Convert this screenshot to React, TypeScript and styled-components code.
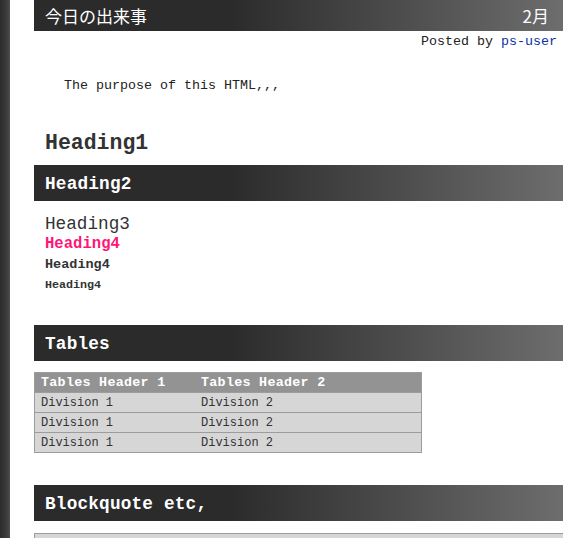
import React from "react";
import styled, { createGlobalStyle } from "styled-components";

const Global = createGlobalStyle`
  html, body { margin: 0; padding: 0; background: #fff; overflow: hidden; }
  body { font-family: "Liberation Mono", "Courier New", monospace; color: #222; }
`;

const Page = styled.div`
  display: flex;
  min-height: 538px;
  width: 563px;
  overflow: hidden;
`;

const Shadow = styled.div`
  flex: 0 0 10px;
  background: linear-gradient(to right, #2c2c2c 0%, #3a3a3a 60%, #4c4c4c 100%);
`;

const Main = styled.div`
  flex: 1;
  padding-left: 24px;
  min-width: 0;
`;

const barBg = `linear-gradient(to right, #2b2b2b 0%, #2b2b2b 37%, #6d6d6d 100%)`;

const TopBar = styled.div`
  height: 31px;
  display: flex;
  align-items: center;
  justify-content: space-between;
  padding: 0 14px 0 11px;
  background: ${barBg};
  color: #fff;
  font-family: "Noto Sans CJK JP", "Noto Sans", sans-serif;
  font-size: 17px;
`;

const Posted = styled.div`
  height: 18px;
  padding-top: 2px;
  line-height: 18px;
  text-align: right;
  padding-right: 6px;
  font-size: 13.33px;
  a { color: #0a2fa8; text-decoration: none; }
`;

const Para = styled.p`
  margin: 27px 0 0;
  padding-left: 30px;
  line-height: 16px;
  font-size: 13.33px;
`;

const H1 = styled.h1`
  margin: 36px 0 0;
  padding-left: 11px;
  font-size: 21.5px;
  line-height: 26px;
  font-weight: bold;
  color: #333;
`;

const Bar = styled.h2<{ $mt: number }>`
  margin: ${(p) => p.$mt}px 0 0;
  height: 36px;
  line-height: 38px;
  padding-left: 11px;
  background: ${barBg};
  color: #fff;
  font-size: 17.7px;
  font-weight: bold;
  letter-spacing: 0.2px;
`;

const Sub = styled.div<{ $size: number; $color?: string; $bold?: boolean; $mt?: number }>`
  margin-top: ${(p) => p.$mt ?? 0}px;
  padding-left: 11px;
  font-size: ${(p) => p.$size}px;
  line-height: 22px;
  height: 20px;
  font-weight: ${(p) => (p.$bold ? "bold" : "normal")};
  color: ${(p) => p.$color ?? "#333"};
`;

const Table = styled.table`
  margin-top: 11px;
  width: 388px;
  table-layout: fixed;
  border-collapse: collapse;
  border: 1px solid #9c9c9c;
  font-size: 12px;
  th {
    background: #939393;
    color: #fff;
    font-weight: bold;
    font-size: 13.33px;
    letter-spacing: 0.3px;
    text-align: left;
    height: 18px;
    line-height: 18px;
    padding: 1px 0 0 6px;
  }
  td {
    background: #d6d6d6;
    height: 18px;
    line-height: 18px;
    padding: 1px 0 0 6px;
    border-top: 1px solid #9c9c9c;
    color: #333;
  }
  th:first-child, td:first-child { width: 154px; }
`;

const Box = styled.div`
  margin-top: 12px;
  height: 40px;
  background: #d6d6d6;
  border-top: 1px solid #9c9c9c;
  border-left: 1px solid #9c9c9c;
`;

export default function App() {
  const rows = [0, 1, 2];
  return (
    <>
      <Global />
      <Page>
        <Shadow />
        <Main>
          <TopBar>
            <span>今日の出来事</span>
            <span>2月</span>
          </TopBar>
          <Posted>
            Posted by <a href="#">ps-user</a>
          </Posted>
          <Para>The purpose of this HTML,,,</Para>
          <H1>Heading1</H1>
          <Bar $mt={9}>Heading2</Bar>
          <Sub $size={17.7} $mt={12}>Heading3</Sub>
          <Sub $size={15.6} $bold $color="#ff1677">Heading4</Sub>
          <Sub $size={13.5} $bold $mt={1}>Heading4</Sub>
          <Sub $size={11.7} $bold>Heading4</Sub>
          <Bar $mt={31}>Tables</Bar>
          <Table>
            <thead>
              <tr>
                <th>Tables Header 1</th>
                <th>Tables Header 2</th>
              </tr>
            </thead>
            <tbody>
              {rows.map((r) => (
                <tr key={r}>
                  <td>Division 1</td>
                  <td>Division 2</td>
                </tr>
              ))}
            </tbody>
          </Table>
          <Bar $mt={32}>Blockquote etc,</Bar>
          <Box />
        </Main>
      </Page>
    </>
  );
}
